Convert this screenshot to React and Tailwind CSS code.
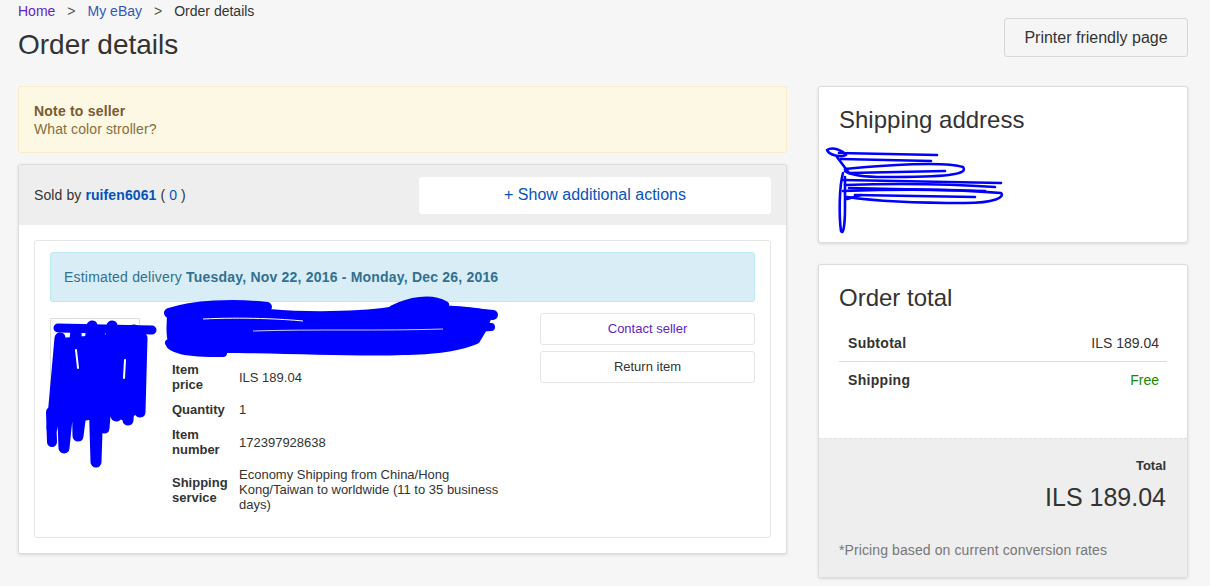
import React from "react";

function ImageScribble() {
  return (
    <svg className="absolute left-[-3px] top-[-3px] overflow-visible" width="108" height="150" viewBox="0 0 108 150" fill="none">
      <path d="M12 22 L90 16 L94 92 L80 106 L62 100 L30 106 L8 104 Z" fill="#0000ff" />
      <path
        d="M4 112 L12 22 L16 132 L28 14 L30 120 L44 10 L48 146 L52 20 L56 112 L64 10 L68 100 L74 18 L80 104 L86 14 L92 96 L94 22"
        stroke="#0000ff"
        strokeWidth="11"
        strokeLinecap="round"
        strokeLinejoin="round"
      />
      <path d="M10 12 L104 14" stroke="#0000ff" strokeWidth="9" strokeLinecap="round" />
      <path d="M3 96 L4 126" stroke="#0000ff" strokeWidth="10" strokeLinecap="round" />
      <path d="M28 34 L30 52" stroke="#ffffff" strokeWidth="2" strokeLinecap="round" />
      <path d="M77 44 L76 62" stroke="#ffffff" strokeWidth="2" strokeLinecap="round" />
    </svg>
  );
}

function TitleScribble() {
  return (
    <svg className="absolute left-[-2px] top-[-14px] overflow-visible" width="336" height="60" viewBox="0 0 336 60" fill="none">
      <path
        d="M4 14 C 30 6, 80 8, 106 10 C 150 14, 200 12, 226 8 C 246 2, 270 0, 280 6 C 300 8, 320 8, 330 14 L 326 26 L 322 34 L 316 44 C 300 52, 270 56, 240 56 C 200 58, 120 54, 60 54 C 30 56, 12 54, 6 46 C 2 36, 4 24, 4 14 Z"
        fill="#0000ff"
      />
      <g stroke="#0000ff" strokeLinecap="round" strokeLinejoin="round">
        <path d="M6 14 C 30 6, 70 4, 104 8" strokeWidth="10" />
        <path d="M230 10 C 246 2, 268 -2, 282 6" strokeWidth="8" />
        <path d="M290 12 L 330 16" strokeWidth="10" />
        <path d="M300 30 L 328 28" strokeWidth="8" />
        <path d="M6 44 C 8 50, 20 54, 60 54" strokeWidth="8" />
      </g>
      <path d="M40 20 C 80 18, 120 20, 140 22" stroke="#ffffff" strokeWidth="1" />
      <path d="M90 32 C 150 30, 220 32, 280 30" stroke="#ffffff" strokeWidth="0.8" />
    </svg>
  );
}

function AddressScribble() {
  return (
    <svg className="absolute left-[-14px] top-[13px] overflow-visible" width="182" height="90" viewBox="0 0 182 90" fill="none">
      <g stroke="#0000ff" strokeWidth="2.6" strokeLinecap="round" strokeLinejoin="round">
        <path d="M2 3 C 8 -1, 18 4, 21 8 C 16 11, 4 8, 2 3 Z" />
        <path d="M14 6 L 112 8" />
        <path d="M16 12 L 106 14" />
        <path d="M12 10 L 24 26" />
        <path d="M20 22 C 60 18, 120 14, 138 20 C 144 28, 120 30, 60 30 C 40 30, 25 28, 20 24" />
        <path d="M24 26 L 120 24" />
        <path d="M18 33 L 176 36" />
        <path d="M20 38 C 80 36, 140 38, 170 40" />
        <path d="M18 44 C 70 42, 130 42, 176 46 C 180 50, 170 56, 140 56 C 100 56, 50 54, 22 50" />
        <path d="M30 48 L 150 50" />
        <path d="M24 41 L 160 44" />
        <path d="M18 26 C 14 40, 14 70, 16 84 C 18 88, 20 80, 20 60 L 20 30" />
        <path d="M22 52 L 36 48" />
      </g>
    </svg>
  );
}

export default function App() {
  return (
    <div className="min-h-[586px] w-[1210px] bg-[#f6f6f6] pl-[18px] pr-[22px] font-['Liberation_Sans',Arial,sans-serif] text-[#333]">
      <div className="flex items-start justify-between">
        <div>
          <nav className="flex h-[22px] items-center text-[14px] leading-[22px]">
            <a className="text-[#6424c4]">Home</a>
            <span className="px-[12px] text-[#555]">&gt;</span>
            <a className="text-[#3556b5]">My eBay</a>
            <span className="px-[12px] text-[#555]">&gt;</span>
            <span className="text-[#333]">Order details</span>
          </nav>
          <h1 className="mt-[6px] text-[28px] font-normal leading-[34px] text-[#333]">Order details</h1>
        </div>
        <button className="mt-[18px] h-[39px] w-[184px] rounded-[3px] border border-[#d6d6d6] bg-[#f5f5f5] text-[16px] text-[#333]">
          Printer friendly page
        </button>
      </div>

      <div className="mt-[24px] flex gap-[31px]">
        {/* Left column */}
        <div className="w-[769px]">
          <div className="rounded-[3px] border border-[#faebcc] bg-[#fcf8e3] px-[15px] pb-[14px] pt-[15px] text-[14px] leading-[18px]">
            <div className="font-bold tracking-[0.2px] text-[#7a5a30]">Note to seller</div>
            <div className="tracking-[0.1px] text-[#8a6d3b]">What color stroller?</div>
          </div>

          <div className="mt-[11px] rounded-[2px] border border-[#ddd] bg-white shadow-[0_1px_3px_rgba(0,0,0,0.12)]">
            <div className="flex h-[60px] items-center justify-between bg-[#eee] px-[15px]">
              <div className="text-[14px] tracking-[0.1px] text-[#333]">
                Sold by <span className="font-bold text-[#0654ba]">ruifen6061</span> ( <span className="text-[#0654ba]">0</span> )
              </div>
              <button className="h-[37px] w-[352px] rounded-[3px] bg-white text-[16px] text-[#0654ba]">+ Show additional actions</button>
            </div>
            <div className="p-[15px]">
              <div className="rounded-[3px] border border-[#e5e5e5] px-[15px] pb-[20px] pt-[11px]">
                <div className="flex h-[50px] items-center rounded-[3px] border border-[#bce8f1] bg-[#d9edf7] px-[13px] text-[14px] tracking-[0.2px] text-[#31708f]">
                  <span>
                    Estimated delivery <span className="font-bold">Tuesday, Nov 22, 2016 - Monday, Dec 26, 2016</span>
                  </span>
                </div>

                <div className="mt-[11px] flex">
                  <div className="w-[115px] shrink-0">
                    <div className="relative mt-[5px] h-[94px] w-[90px] border border-[#ddd] bg-white">
                      <ImageScribble />
                    </div>
                  </div>
                  <div className="w-[355px] shrink-0">
                    <div className="relative h-[44px]">
                      <TitleScribble />
                    </div>
                    <table className="ml-[7px] w-[342px] table-fixed border-collapse text-[13px] leading-[15px]">
                      <colgroup>
                        <col className="w-[67px]" />
                        <col />
                      </colgroup>
                      <tbody>
                        <tr>
                          <td className="py-[5px] pr-[9px] align-middle font-bold">Item price</td>
                          <td className="py-[5px] align-middle">ILS 189.04</td>
                        </tr>
                        <tr>
                          <td className="py-[5px] pr-[9px] align-middle font-bold">Quantity</td>
                          <td className="py-[5px] align-middle">1</td>
                        </tr>
                        <tr>
                          <td className="py-[5px] pr-[9px] align-middle font-bold">Item number</td>
                          <td className="py-[5px] align-middle">172397928638</td>
                        </tr>
                        <tr>
                          <td className="py-[5px] pr-[9px] align-middle font-bold">Shipping service</td>
                          <td className="py-[5px] pr-[10px] align-middle">
                            Economy Shipping from China/Hong Kong/Taiwan to worldwide (11 to 35 business days)
                          </td>
                        </tr>
                      </tbody>
                    </table>
                  </div>
                  <div className="ml-[20px] flex w-[215px] shrink-0 flex-col gap-[6px]">
                    <button className="h-[32px] rounded-[3px] border border-[#e5e5e5] bg-white text-[13px] text-[#6424c4]">Contact seller</button>
                    <button className="h-[32px] rounded-[3px] border border-[#e5e5e5] bg-white text-[13px] text-[#333]">Return item</button>
                  </div>
                </div>
              </div>
            </div>
          </div>
        </div>

        {/* Right column */}
        <div className="w-[370px]">
          <div className="h-[157px] rounded-[3px] border border-[#ddd] bg-white px-[20px] pt-[19px] shadow-[0_1px_3px_rgba(0,0,0,0.12)]">
            <h2 className="text-[24px] font-normal leading-[28px] text-[#333]">Shipping address</h2>
            <div className="relative h-[90px]">
              <AddressScribble />
            </div>
          </div>

          <div className="mt-[21px] overflow-hidden rounded-[3px] border border-[#ddd] bg-white shadow-[0_1px_3px_rgba(0,0,0,0.12)]">
            <div className="h-[173px] px-[20px] pt-[19px]">
              <h2 className="text-[24px] font-normal leading-[28px] text-[#333]">Order total</h2>
              <div className="mt-[13px] text-[14px] leading-[18px]">
                <div className="flex justify-between border-b border-[#ddd] py-[9px] pl-[9px] pr-[8px]">
                  <span className="font-bold tracking-[0.3px]">Subtotal</span>
                  <span>ILS 189.04</span>
                </div>
                <div className="flex justify-between py-[9px] pl-[9px] pr-[8px]">
                  <span className="font-bold tracking-[0.3px]">Shipping</span>
                  <span className="text-[#168a00]">Free</span>
                </div>
              </div>
            </div>
            <div className="h-[139px] border-t border-dashed border-[#e2e2e2] bg-[#eee] pt-[19px]">
              <div className="pr-[21px] text-right text-[13px] font-bold leading-[16px]">Total</div>
              <div className="mt-[8px] pr-[21px] text-right text-[25px] leading-[30px]">ILS 189.04</div>
              <div className="mt-[29px] pl-[20px] text-[14px] leading-[18px] tracking-[0.1px] text-[#777]">*Pricing based on current conversion rates</div>
            </div>
          </div>
        </div>
      </div>
    </div>
  );
}
